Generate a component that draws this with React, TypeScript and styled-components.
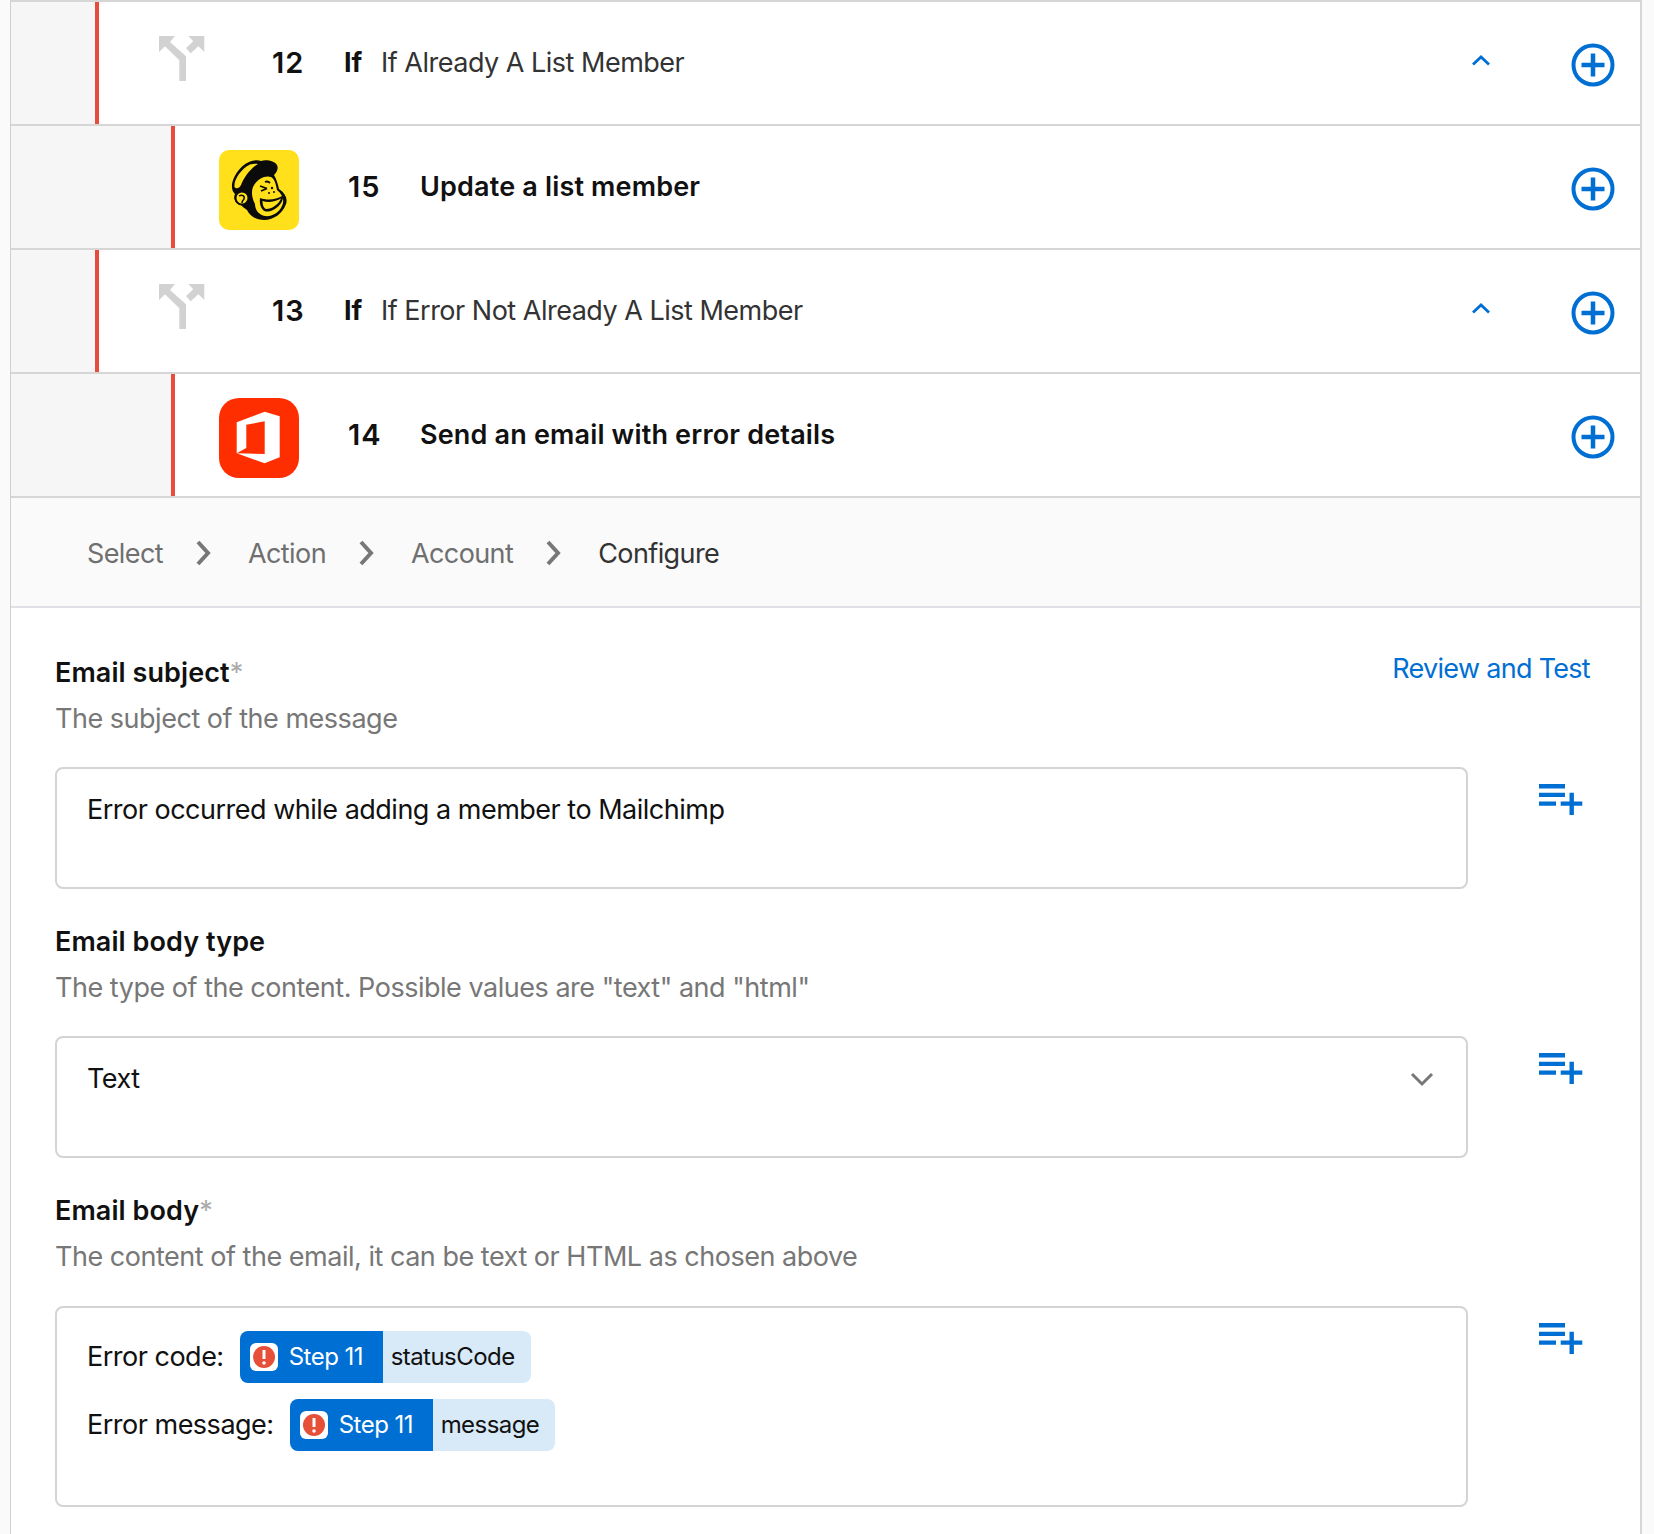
import React from "react";
import styled, { createGlobalStyle } from "styled-components";

const Global = createGlobalStyle`
  html, body { margin: 0; padding: 0; background: #fafafa; }
  body { font-family: Inter, "Liberation Sans", sans-serif; -webkit-font-smoothing: antialiased; }
`;

const BLUE = "#006fd3";

const Panel = styled.div`
  box-sizing: border-box;
  width: 1632px;
  height: 1534px;
  margin-left: 10px;
  background: #fff;
  border-left: 1px solid #d0d0d0;
  border-right: 2px solid #d6d6d6;
  border-top: 2px solid #d6d6d6;
  overflow: hidden;
`;

const Row = styled.div`
  display: flex;
  height: 122px;
  border-bottom: 2px solid #d6d6d6;
`;

const Gutter = styled.div<{ $w: number }>`
  width: ${(p) => p.$w}px;
  flex: none;
  background: #f6f6f6;
`;

const RowBody = styled.div<{ $pad: number }>`
  flex: 1;
  display: flex;
  align-items: center;
  border-left: 4px solid #e84c3d;
  padding: 0 25px 2px ${(p) => p.$pad}px;
`;

const AppTile = styled.div<{ $bg: string; $r: number }>`
  width: 80px;
  height: 80px;
  flex: none;
  background: ${(p) => p.$bg};
  border-radius: ${(p) => p.$r}px;
  display: flex;
  align-items: center;
  justify-content: center;
  margin-top: 8px;
`;

const IfIcon = styled.svg`
  width: 46px;
  height: 46px;
  flex: none;
  margin-top: -6px;
`;

const StepNo = styled.span<{ $w: number; $ml: number }>`
  flex: none;
  width: ${(p) => p.$w}px;
  margin-left: ${(p) => p.$ml}px;
  font-size: 29px;
  font-weight: 600;
  letter-spacing: 1px;
  color: #111;
  line-height: 1;
`;

const IfWord = styled.span`
  flex: none;
  width: 37px;
  font-size: 27px;
  font-weight: 700;
  color: #111;
`;

const IfName = styled.span`
  flex: 1;
  font-size: 27px;
  letter-spacing: -0.5px;
  color: #333;
`;

const ActionName = styled.span`
  flex: 1;
  font-size: 27px;
  font-weight: 600;
  letter-spacing: 0.17px;
  color: #111;
`;

const Collapse = styled.svg`
  width: 20px;
  height: 12px;
  flex: none;
  margin: -4px 80px 0 0;
`;

const AddCircle = styled.svg`
  width: 44px;
  height: 44px;
  flex: none;
  margin-top: 6px;
`;

const Crumbs = styled.div`
  height: 110px;
  box-sizing: border-box;
  display: flex;
  align-items: center;
  padding: 2px 0 0 76px;
  background: #fafafa;
  border-bottom: 2px solid #dfe1e6;
`;

const Crumb = styled.span<{ $on?: boolean }>`
  font-size: 27px;
  letter-spacing: -0.6px;
  color: ${(p) => (p.$on ? "#333" : "#6f6f6f")};
`;

const CrumbSep = styled.svg`
  width: 18px;
  height: 26px;
  margin: 0 35px 0 32px;
  flex: none;
`;

const Form = styled.div`
  position: relative;
  padding: 47px 0 0 44px;
`;

const ReviewLink = styled.a`
  position: absolute;
  top: 43px;
  right: 50px;
  font-size: 27px;
  letter-spacing: -0.7px;
  color: ${BLUE};
  line-height: 36px;
`;

const Field = styled.div`
  margin-bottom: 35px;
`;

const Label = styled.div`
  font-size: 27px;
  font-weight: 600;
  letter-spacing: 0.08px;
  color: #111;
  line-height: 36px;
  height: 36px;
`;

const Req = styled.span`
  color: #aaa;
  font-weight: 400;
`;

const Desc = styled.div`
  margin-top: 10px;
  font-size: 27px;
  letter-spacing: -0.48px;
  color: #777;
  line-height: 36px;
  height: 36px;
`;

const InputRow = styled.div`
  display: flex;
  align-items: flex-start;
  margin-top: 30px;
`;

const BodyRow = styled(InputRow)`
  margin-top: 31px;
`;

const InputBox = styled.div<{ $h: number }>`
  box-sizing: border-box;
  position: relative;
  width: 1413px;
  height: ${(p) => p.$h}px;
  border: 2px solid #d4d4d4;
  border-radius: 8px;
  padding: 23px 30px 0;
  font-size: 27px;
  letter-spacing: -0.5px;
  line-height: 36px;
  color: #111;
`;

const SelectCaret = styled.svg`
  position: absolute;
  right: 32px;
  top: 33px;
  width: 24px;
  height: 16px;
`;

const InsertIcon = styled.svg`
  width: 46px;
  height: 32px;
  flex: none;
  margin: 17px 0 0 71px;
`;

const BodyLine = styled.div`
  display: flex;
  align-items: center;
  height: 52px;
  margin-bottom: 16px;
`;

const Chip = styled.span`
  display: inline-flex;
  height: 52px;
  margin-left: 16px;
  border-radius: 8px;
  overflow: hidden;
  font-size: 24px;
  line-height: 52px;
`;

const ChipStep = styled.span`
  display: flex;
  align-items: center;
  width: 143px;
  box-sizing: border-box;
  padding-left: 10px;
  background: ${BLUE};
  color: #fff;
`;

const ChipBadge = styled.span`
  width: 28px;
  height: 28px;
  background: #fff;
  border-radius: 6px;
  display: flex;
  align-items: center;
  justify-content: center;
  margin-right: 11px;
`;

const ChipField = styled.span`
  padding: 0 16px 0 8px;
  letter-spacing: -0.55px;
  background: #d8e9f8;
  color: #111;
`;

const BodyBox = styled(InputBox)`
  padding-top: 23px;
`;

const BranchGlyph = () => (
  <IfIcon viewBox="0 0 46 46">
    <path
      d="M0 0H16L11 6L27 20.300V45H20.300V24.300L6 10.300L0 16Z M45.300 0V16L39.300 10.300L31.700 17.300L27 12L34.300 5.300L29.300 0Z"
      fill="#d2d2d2"
    />
  </IfIcon>
);

const Plus = () => (
  <AddCircle viewBox="0 0 44 44">
    <circle cx="22" cy="22" r="19.500" fill="none" stroke={BLUE} strokeWidth="4" />
    <path d="M22 10.500V33.500M10.500 22H33.500" stroke={BLUE} strokeWidth="4.500" fill="none" />
  </AddCircle>
);

const Chevron = () => (
  <Collapse viewBox="0 0 20 12">
    <path d="M2 10.500L10 3L18 10.500" fill="none" stroke={BLUE} strokeWidth="2.800" />
  </Collapse>
);

const Sep = () => (
  <CrumbSep viewBox="0 0 18 26">
    <path d="M3 2L13 13L3 24" fill="none" stroke="#777" strokeWidth="4" />
  </CrumbSep>
);

const Insert = () => (
  <InsertIcon viewBox="0 0 46 32">
    <path d="M0 2.200H26M0 10.900H26M0 19.600H17" stroke={BLUE} strokeWidth="4.400" fill="none" />
    <path d="M21.700 19.600H43.300M32.700 8.700V31" stroke={BLUE} strokeWidth="4.400" fill="none" />
  </InsertIcon>
);

const MailchimpLogo = () => (
  <svg width="80" height="80" viewBox="0 0 80 80">
    <path
      d="M13 37C12 30 20 16 30 12C35 10 39 10 42 11C47 9 56 11 58 15C60 19 57 23 55 25C58 30 59 35 60 39C66 43 69 49 67 54C64 63 55 70 45 70C37 70 31 66 28 60C25 58 23 56 22 55C16 54 14 48 16 44C14 42 13 40 13 37Z"
      fill="#0b0b0b"
    />
    <path d="M15.500 37C14.500 30 22 19 31 14.500C34 13.500 37 13.500 39 14C32 18 25 27 22 35C20 39 17 39 15.500 37Z" fill="#ffe01b" />
    <path
      d="M34 37C38 29 46 25 52 27C56 29 57 35 58 40C63 44 66 50 63 56C60 63 52 67 46 66C40 65 36 60 36 54C33 48 32 42 34 37Z"
      fill="#ffe01b"
    />
    <circle cx="23" cy="48" r="6.500" fill="#ffe01b" stroke="#0b0b0b" strokeWidth="2" />
    <path d="M20 46C23 44 26 46 25 49C24 50 23 51 23 53" fill="none" stroke="#0b0b0b" strokeWidth="1.500" />
    <path d="M41 48C48 50.500 57 50 64 45.500C65 53 56 62 47 61.500C43 61 40 55 41 48Z" fill="#0b0b0b" />
    <path d="M43.500 51C49 53 56 52 62 48.500C60 54 53 59 47 59C44.500 58 43.500 54.500 43.500 51Z" fill="#ffe01b" />
    <path d="M41 36L48 38.500M42 41L48 38.500M46 32C48 31 50 32 51 33" fill="none" stroke="#0b0b0b" strokeWidth="1.800" />
    <circle cx="53" cy="38" r="1.200" fill="#0b0b0b" />
    <circle cx="50" cy="43" r="1" fill="#0b0b0b" />
    <circle cx="55" cy="42" r="1" fill="#0b0b0b" />
  </svg>
);

const OfficeLogo = () => (
  <svg width="80" height="80" viewBox="0 0 80 80">
    <path
      d="M17.700 24.300L45.700 13.700L60.700 18.300V59.300L45.700 65.300L17.700 55.300L45.700 56V23.300L27.300 26.700V50L17.700 55.300Z"
      fill="#fff"
    />
  </svg>
);

const Alert = () => (
  <svg width="24" height="24" viewBox="0 0 24 24">
    <circle cx="12" cy="12" r="11" fill="#e64f38" />
    <path d="M12 5V14" stroke="#fff" strokeWidth="3" />
    <circle cx="12" cy="18" r="1.800" fill="#fff" />
  </svg>
);

const StepChip = ({ field }: { field: string }) => (
  <Chip>
    <ChipStep>
      <ChipBadge>
        <Alert />
      </ChipBadge>
      Step 11
    </ChipStep>
    <ChipField>{field}</ChipField>
  </Chip>
);

export default function App() {
  return (
    <>
      <Global />
      <Panel>
        <Row>
          <Gutter $w={84} />
          <RowBody $pad={60}>
            <BranchGlyph />
            <StepNo $w={72} $ml={67}>12</StepNo>
            <IfWord>If</IfWord>
            <IfName>If Already A List Member</IfName>
            <Chevron />
            <Plus />
          </RowBody>
        </Row>
        <Row>
          <Gutter $w={160} />
          <RowBody $pad={44}>
            <AppTile $bg="#ffe01b" $r={10}>
              <MailchimpLogo />
            </AppTile>
            <StepNo $w={72} $ml={49}>15</StepNo>
            <ActionName>Update a list member</ActionName>
            <Plus />
          </RowBody>
        </Row>
        <Row>
          <Gutter $w={84} />
          <RowBody $pad={60}>
            <BranchGlyph />
            <StepNo $w={72} $ml={67}>13</StepNo>
            <IfWord>If</IfWord>
            <IfName>If Error Not Already A List Member</IfName>
            <Chevron />
            <Plus />
          </RowBody>
        </Row>
        <Row>
          <Gutter $w={160} />
          <RowBody $pad={44}>
            <AppTile $bg="#ff2e00" $r={20}>
              <OfficeLogo />
            </AppTile>
            <StepNo $w={72} $ml={49}>14</StepNo>
            <ActionName>Send an email with error details</ActionName>
            <Plus />
          </RowBody>
        </Row>
        <Crumbs>
          <Crumb>Select</Crumb>
          <Sep />
          <Crumb>Action</Crumb>
          <Sep />
          <Crumb>Account</Crumb>
          <Sep />
          <Crumb $on>Configure</Crumb>
        </Crumbs>
        <Form>
          <ReviewLink>Review and Test</ReviewLink>
          <Field>
            <Label>Email subject<Req>*</Req></Label>
            <Desc>The subject of the message</Desc>
            <InputRow>
              <InputBox $h={122}>Error occurred while adding a member to Mailchimp</InputBox>
              <Insert />
            </InputRow>
          </Field>
          <Field>
            <Label>Email body type</Label>
            <Desc>The type of the content. Possible values are "text" and "html"</Desc>
            <InputRow>
              <InputBox $h={122}>
                Text
                <SelectCaret viewBox="0 0 24 16">
                  <path d="M2 3L12 13L22 3" fill="none" stroke="#777" strokeWidth="3" />
                </SelectCaret>
              </InputBox>
              <Insert />
            </InputRow>
          </Field>
          <Field>
            <Label>Email body<Req>*</Req></Label>
            <Desc>The content of the email, it can be text or HTML as chosen above</Desc>
            <BodyRow>
              <BodyBox $h={201}>
                <BodyLine>Error code:<StepChip field="statusCode" /></BodyLine>
                <BodyLine>Error message:<StepChip field="message" /></BodyLine>
              </BodyBox>
              <Insert />
            </BodyRow>
          </Field>
        </Form>
      </Panel>
    </>
  );
}
